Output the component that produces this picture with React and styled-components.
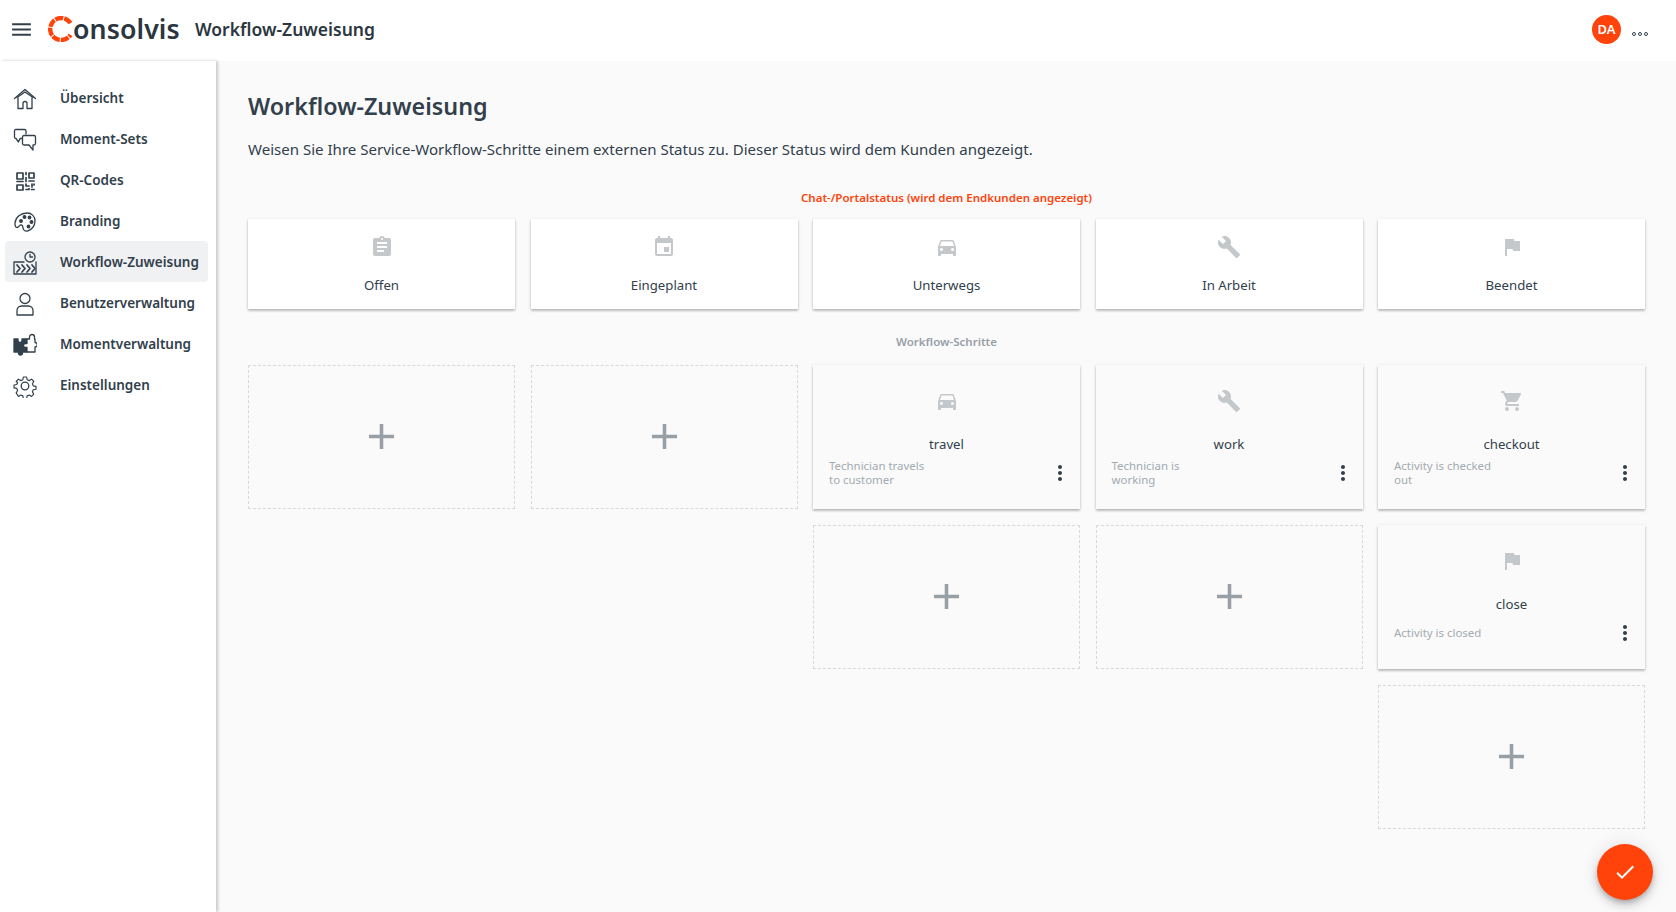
import React from "react";
import styled, { createGlobalStyle } from "styled-components";
import { MdAssignment, MdEvent, MdDirectionsCar, MdBuild, MdFlag, MdShoppingCart, MdAdd, MdMoreVert, MdMenu, MdCheck } from "react-icons/md";

const Global = createGlobalStyle`
  html, body { margin: 0; padding: 0; height: 100%; overflow: hidden; background: #fff; }
  body { font-family: "Noto Sans", "Open Sans", sans-serif; color: #32404c; }
  * { box-sizing: border-box; }
`;

const Page = styled.div`display: flex; flex-direction: column; height: 912px;`;
const Header = styled.header`
  height: 61px; flex: none; display: flex; align-items: center; padding: 0 28px 3px 9px; background: #fff;
`;
const MenuBtn = styled.div`width: 25px; height: 25px; color: #32404c; font-size: 25px; display: flex; margin-right: 14px; margin-top: 1px;`;
const Logo = styled.div`display: flex; align-items: center; height: 30px; width: 147px; flex: none;`;
const LogoText = styled.span`font-size: 26.7px; font-weight: 600; letter-spacing: 0.1px; color: #2b3640; line-height: 30px; margin-left: -1px; margin-top: -1px;`;
const AppTitle = styled.div`font-size: 17.5px; font-weight: 600; color: #2b3640; flex: 1;`;
const Avatar = styled.div`
  width: 29px; height: 29px; border-radius: 50%; background: #ff430b; color: #fff; font-size: 13px; font-weight: 600;
  display: flex; align-items: center; justify-content: center; margin-right: 11px;
`;
const Dots = styled.div`display: flex; gap: 2px; margin-top: 10px;`;
const Dot = styled.span`width: 4px; height: 4px; border-radius: 50%; border: 1px solid #32404c;`;

const Body = styled.div`flex: 1; display: flex; min-height: 0;`;
const Sidebar = styled.nav`
  width: 216px; flex: none; background: #fff; padding: 16px 8px 0 5px; display: flex; flex-direction: column;
  position: relative; z-index: 1; box-shadow: 2px 0 3px rgba(0,0,0,0.2);
`;
const NavItem = styled.div`
  height: 41px; display: flex; align-items: center; padding-left: 8px; gap: 23px; border-radius: 4px;
  background: ${p => (p.$active ? "#f0f1f2" : "transparent")};
  font-size: 13.5px; font-weight: 600; color: #32404c; white-space: nowrap;
`;
const NavIcon = styled.svg`width: 24px; height: 24px; flex: none; margin-top: 3px; fill: none; stroke: #32404c; stroke-width: 1.3; stroke-linecap: round; stroke-linejoin: round;`;

const Main = styled.main`flex: 1; background: #fafafa; padding: 27px 31px 0 32px; min-width: 0;`;
const H1 = styled.h1`margin: 0; font-size: 23.3px; line-height: 36px; font-weight: 600; color: #32404c;`;
const Lead = styled.p`margin: 13px 0 0; font-size: 15.06px; line-height: 24px; color: #32404c;`;
const SectionLabel = styled.div`
  text-align: center; font-size: 11.5px; line-height: 16px; font-weight: 600; color: ${p => p.$accent ? "#ff430b" : "#96a0a8"};
  margin: ${p => p.$accent ? "29px 0 13px" : "25px 0 15px"};
`;
const Row = styled.div`display: grid; grid-template-columns: repeat(5, 1fr); gap: 15.5px; align-items: start;`;
const Column = styled.div`display: flex; flex-direction: column; gap: 16px;`;

const StatusCard = styled.div`
  height: 90px; background: #fff; box-shadow: 0 1px 3px rgba(0,0,0,0.2), 0 2px 2px rgba(0,0,0,0.14);
  display: flex; flex-direction: column; align-items: center; padding-top: 16px;
`;
const GlyphWrap = styled.div`width: 24px; height: 24px; font-size: 24px; color: #c4c8cb; display: flex;`;
const StatusName = styled.div`margin-top: 16px; font-size: 13.2px; line-height: 20px; color: #32404c;`;

const StepCard = styled.div`
  height: 144px; background: #fafafa; box-shadow: 0 1px 3px rgba(0,0,0,0.2), 0 2px 2px rgba(0,0,0,0.14);
  padding: 24px 16px 0; display: flex; flex-direction: column; align-items: center; position: relative;
`;
const StepName = styled.div`margin-top: 21px; font-size: 13.2px; line-height: 20px; color: #32404c;`;
const StepFoot = styled.div`align-self: stretch; display: flex; align-items: center; justify-content: space-between; height: 28px; margin-top: 5px;`;
const StepDesc = styled.div`font-size: 11.45px; line-height: 14px; color: #a3abb1; width: 100px;`;
const More = styled.div`font-size: 24px; color: #32404c; display: flex; margin-right: -8px;`;

const EmptyCard = styled.div`
  height: 144px; border: 1px dashed #d6d8da; color: #98a0a6; font-size: 43px; padding-bottom: 1px;
  display: flex; align-items: center; justify-content: center;
`;
const Fab = styled.button`
  position: fixed; left: 1597px; top: 844px; width: 56px; height: 56px; border-radius: 50%; border: 0; padding: 0;
  background: #ff430b; color: #fff; font-size: 24px; display: flex; align-items: center; justify-content: center;
  box-shadow: 0 3px 5px -1px rgba(0,0,0,.2), 0 6px 10px rgba(0,0,0,.14), 0 1px 18px rgba(0,0,0,.12);
`;

const nav = [
  ["Übersicht", <><path d="M1.500 11.500 12 2.500l10.500 9" /><path d="M4 10.500 12 5l8 5.500" /><path d="M5 11v10.500h5v-5a2 2 0 0 1 4 0v5h5V11" /></>],
  ["Moment-Sets", <><path d="M2.500 1.500h9a1.500 1.500 0 0 1 1.500 1.500v3M9 10.500H7l-1.500 3.500L3 10.500a1.500 1.500 0 0 1-1.500-1.500V3a1.500 1.500 0 0 1 1-1.500" /><path d="M11 7.500h10a1.500 1.500 0 0 1 1.500 1.500v6.500a1.500 1.500 0 0 1-1.500 1.500h-1v5L16 17h-5a1.500 1.500 0 0 1-1.500-1.500V9A1.500 1.500 0 0 1 11 7.500z" /></>],
  ["QR-Codes", <g strokeWidth="1.700"><rect x="4" y="4" width="6" height="6" /><rect x="16" y="4" width="5" height="5" /><rect x="4" y="16" width="6" height="5" /><path d="M13 3.500v2M13 8.500v4M4 12.500h6M16 12h5M13 15v2h3M19 15v3M21 15v1M13 20.500h3v-1M18.500 20.500h2.500" /></g>],
  ["Branding", <><path d="M14 3C8 3 2.500 7 2 13c-.2 2.500.6 4.500 2 4.500 2 0 2.500-3 4.500-2.500s1 3 2 4.500 2.500 2 4 1.500c4-1 7.500-5 7.500-10S18.500 3 14 3z" /><circle cx="8" cy="11" r="1.300" fill="#32404c" /><circle cx="11.500" cy="7" r="1.300" fill="#32404c" /><circle cx="16.500" cy="7.500" r="1.300" fill="#32404c" /><circle cx="18.500" cy="12" r="1.300" fill="#32404c" /><circle cx="15.500" cy="16.500" r="1.300" fill="#32404c" /></>],
  ["Workflow-Zuweisung", <><path d="M1 11h10M1 11v12h22V11" /><path d="M4 14l3 3.500-3 3.500M9 14l3 3.500-3 3.500M14 14l3 3.500-3 3.500M19 14l3 3.500-3 3.500" strokeWidth="1.700" /><circle cx="17" cy="6" r="5" /><path d="M17 3.500V6h2.500" /></>],
  ["Benutzerverwaltung", <><circle cx="12" cy="6.500" r="5" /><path d="M4 23v-4.500A4.500 4.500 0 0 1 8.500 14h7a4.500 4.500 0 0 1 4.500 4.500V23z" /></>],
  ["Momentverwaltung", <><path d="M1 6h4v1.500a2 2 0 0 0 4 0V6h5v4.500h-1.500a2 2 0 0 0 0 4H14V19H9.500v1a2 2 0 0 1-4 0v-1H1z" fill="#32404c" /><path d="M14 6h2.500V4a2.500 2.500 0 0 1 5 0v2h.5v3.500a2 2 0 0 1 0 4.500v5h-8" /></>],
  ["Einstellungen", <><circle cx="12" cy="12" r="3.800" /><path d="M10.200 2h3.600l.6 3 2.300 1 2.600-1.600 2.500 2.600-1.600 2.500 1 2.300 3 .6v3.200l-3 .6-1 2.300 1.600 2.600-2.500 2.500-2.600-1.600-2.300 1-.6 3h-3.600l-.6-3-2.300-1-2.600 1.600L2.200 19.600l1.600-2.600-1-2.300-3-.6v-3.200l3-.6 1-2.300L2.200 7l2.500-2.600 2.600 1.600 2.300-1z" transform="translate(1.200 1.200) scale(.9)" /></>],
];

const columns = [
  { status: ["Offen", MdAssignment], steps: [null] },
  { status: ["Eingeplant", MdEvent], steps: [null] },
  { status: ["Unterwegs", MdDirectionsCar], steps: [["travel", "Technician travels to customer", MdDirectionsCar], null] },
  { status: ["In Arbeit", MdBuild], steps: [["work", "Technician is working", MdBuild], null] },
  { status: ["Beendet", MdFlag], steps: [["checkout", "Activity is checked out", MdShoppingCart], ["close", "Activity is closed", MdFlag], null] },
];

export default function App() {
  return (
    <Page>
      <Global />
      <Header>
        <MenuBtn><MdMenu /></MenuBtn>
        <Logo>
          <svg width="26" height="26" viewBox="0 0 26 26" style={{ flex: "none" }}>
            <path d="M22.500 7.200A11 11 0 1 0 22.500 18.800" fill="none" stroke="#ff430b" strokeWidth="4.400" strokeDasharray="8 1" />
          </svg>
          <LogoText>onsolvis</LogoText>
        </Logo>
        <AppTitle>Workflow-Zuweisung</AppTitle>
        <Avatar>DA</Avatar>
        <Dots><Dot /><Dot /><Dot /></Dots>
      </Header>
      <Body>
        <Sidebar>
          {nav.map(([label, icon]) => (
            <NavItem key={label} $active={label === "Workflow-Zuweisung"}>
              <NavIcon viewBox="0 0 24 24">{icon}</NavIcon>
              {label}
            </NavItem>
          ))}
        </Sidebar>
        <Main>
          <H1>Workflow-Zuweisung</H1>
          <Lead>Weisen Sie Ihre Service-Workflow-Schritte einem externen Status zu. Dieser Status wird dem Kunden angezeigt.</Lead>
          <SectionLabel $accent>Chat-/Portalstatus (wird dem Endkunden angezeigt)</SectionLabel>
          <Row>
            {columns.map(({ status: [name, Icon] }) => (
              <StatusCard key={name}>
                <GlyphWrap><Icon /></GlyphWrap>
                <StatusName>{name}</StatusName>
              </StatusCard>
            ))}
          </Row>
          <SectionLabel>Workflow-Schritte</SectionLabel>
          <Row>
            {columns.map(({ status: [name], steps }) => (
              <Column key={name}>
                {steps.map((step, i) => step ? (
                  <StepCard key={i}>
                    <GlyphWrap as={step[2]} />
                    <StepName>{step[0]}</StepName>
                    <StepFoot>
                      <StepDesc>{step[1]}</StepDesc>
                      <More><MdMoreVert /></More>
                    </StepFoot>
                  </StepCard>
                ) : (
                  <EmptyCard key={i}><MdAdd /></EmptyCard>
                ))}
              </Column>
            ))}
          </Row>
        </Main>
      </Body>
      <Fab><MdCheck /></Fab>
    </Page>
  );
}
